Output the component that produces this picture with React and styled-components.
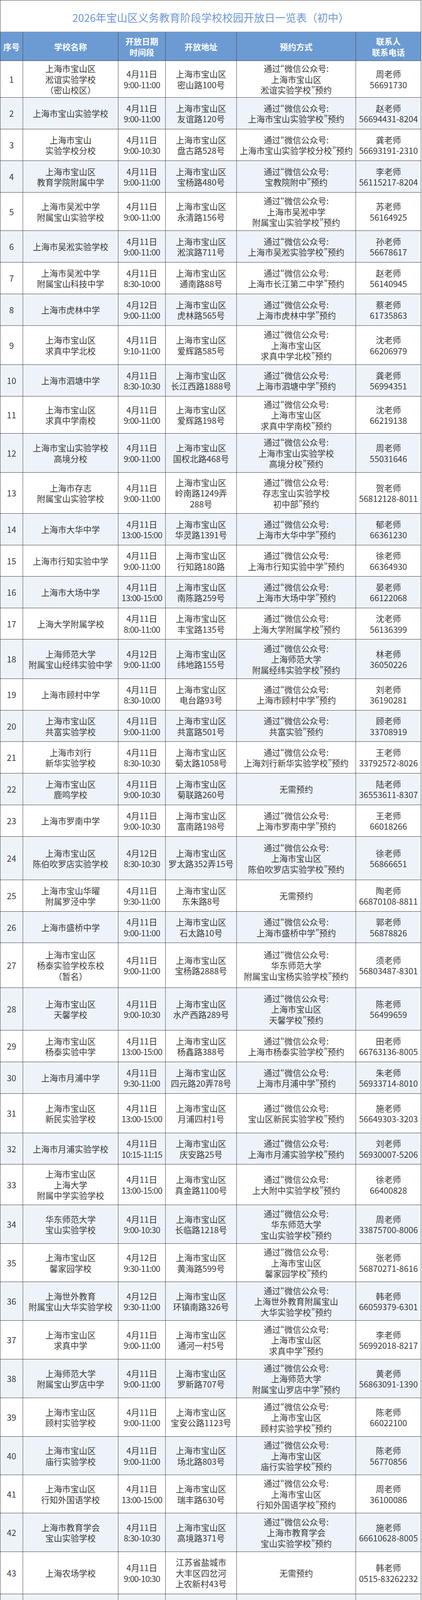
import React from "react";
import styled, { createGlobalStyle } from "styled-components";

const Global = createGlobalStyle`
  html, body { margin: 0; padding: 0; background: #ffffff; }
  body { font-family: "Noto Sans CJK SC", "Noto Sans", sans-serif; }
`;

const COLS = "57px 244px 121px 182px 305px 167px";

const Sheet = styled.div`
  width: 1076px;
  border: 1px solid #3f3f3f;
  font-family: "Noto Sans CJK SC", "Noto Sans", sans-serif;
  color: #3b3b3b;
`;

const Title = styled.div`
  height: 80px;
  box-sizing: border-box;
  padding-top: 6px;
  display: flex;
  align-items: center;
  justify-content: center;
  font-size: 27px;
  color: #6e97d0;
`;

const Row = styled.div`
  display: grid;
  grid-template-columns: ${COLS};
  height: ${(p) => p.$h}px;
  box-sizing: border-box;
  border-top: 1px solid ${(p) => (p.$head ? "#9a9a9a" : "#3f3f3f")};
  background: ${(p) => (p.$head ? "#6c9bd3" : p.$alt ? "#eef3fa" : "#ffffff")};
`;

const Cell = styled.div`
  display: flex;
  align-items: center;
  justify-content: center;
  min-width: 0;
  border-left: ${(p) => (p.$first ? "none" : "1px solid #4a4a4a")};
`;

const Text = styled.div`
  text-align: center;
  white-space: pre;
  font-size: 21.5px;
  line-height: 27.5px;
  font-feature-settings: ${(p) => (p.$prop ? '"pwid"' : "normal")};
`;

const HeadText = styled(Text)`
  color: #ffffff;
  font-weight: 700;
  font-size: 21px;
  line-height: 28px;
`;

const Line = styled.span`
  display: block;
  letter-spacing: ${(p) => (p.$tight ? "-1px" : "normal")};
`;

const W = (a) => `通过“微信公众号:\n${a}”预约`;

const DATA = [
  ["上海市宝山区\n淞谊实验学校\n（密山校区）", "4月11日\n9:00-11:00", "上海市宝山区\n密山路100号", W("上海市宝山区\n淞谊实验学校"), "周老师\n56691730"],
  ["上海市宝山实验学校", "4月11日\n9:00-11:00", "上海市宝山区\n友谊路120号", W("上海市宝山实验学校"), "赵老师\n56694431-8204"],
  ["上海市宝山\n实验学校分校", "4月11日\n9:00-10:30", "上海市宝山区\n盘古路528号", W("上海市宝山实验学校分校"), "龚老师\n56693191-2310"],
  ["上海市宝山区\n教育学院附属中学", "4月11日\n9:00-11:00", "上海市宝山区\n宝杨路480号", W("宝教院附中"), "李老师\n56115217-8204"],
  ["上海市吴淞中学\n附属宝山实验学校", "4月11日\n9:00-11:00", "上海市宝山区\n永清路156号", W("上海市吴淞中学\n附属宝山实验学校"), "苏老师\n56164925"],
  ["上海市吴淞实验学校", "4月11日\n9:00-11:00", "上海市宝山区\n淞滨路711号", W("上海市吴淞实验学校"), "孙老师\n56678617"],
  ["上海市吴淞中学\n附属宝山科技中学", "4月11日\n8:30-10:00", "上海市宝山区\n通南路88号", W("上海市长江第二中学"), "赵老师\n56140945"],
  ["上海市虎林中学", "4月12日\n9:00-11:00", "上海市宝山区\n虎林路565号", W("上海市虎林中学"), "蔡老师\n61735863"],
  ["上海市宝山区\n求真中学北校", "4月11日\n9:10-11:00", "上海市宝山区\n爱辉路585号", W("上海市宝山区\n求真中学北校"), "沈老师\n66206979"],
  ["上海市泗塘中学", "4月11日\n8:30-10:30", "上海市宝山区\n长江西路1888号", W("上海市泗塘中学"), "龚老师\n56994351"],
  ["上海市宝山区\n求真中学南校", "4月11日\n9:00-11:00", "上海市宝山区\n爱辉路198号", W("上海市宝山区\n求真中学南校"), "沈老师\n66219138"],
  ["上海市宝山实验学校\n高境分校", "4月11日\n9:00-11:00", "上海市宝山区\n国权北路468号", W("上海市宝山实验学校\n高境分校"), "周老师\n55031646"],
  ["上海市存志\n附属宝山实验学校", "4月11日\n9:00-11:00", "上海市宝山区\n岭南路1249弄\n288号", W("存志宝山实验学校\n初中部"), "贺老师\n56812128-8011"],
  ["上海市大华中学", "4月11日\n13:00-15:00", "上海市宝山区\n华灵路1391号", W("上海市大华中学"), "郁老师\n66361230"],
  ["上海市行知实验中学", "4月11日\n9:00-11:00", "上海市宝山区\n行知路180路", W("上海市行知实验中学"), "徐老师\n66364930"],
  ["上海市大场中学", "4月11日\n13:00-15:00", "上海市宝山区\n南陈路259号", W("上海市大场中学"), "晏老师\n66122068"],
  ["上海大学附属学校", "4月11日\n8:00-11:00", "上海市宝山区\n丰宝路135号", W("上海大学附属学校"), "沈老师\n56136399"],
  ["上海师范大学\n附属宝山经纬实验中学", "4月12日\n9:00-11:00", "上海市宝山区\n纬地路155号", W("上海师范大学\n附属经纬实验学校"), "林老师\n36050226"],
  ["上海市顾村中学", "4月11日\n8:30-10:00", "上海市宝山区\n电台路93号", W("上海市顾村中学"), "刘老师\n36190281"],
  ["上海市宝山区\n共富实验学校", "4月11日\n9:00-11:00", "上海市宝山区\n共富路501号", W("共富实验"), "顾老师\n33708919"],
  ["上海市刘行\n新华实验学校", "4月11日\n8:30-10:30", "上海市宝山区\n菊太路1058号", W("上海刘行新华实验学校"), "王老师\n33792572-8026"],
  ["上海市宝山区\n鹿鸣学校", "4月11日\n9:00-10:30", "上海市宝山区\n菊联路260号", "无需预约", "陆老师\n36553611-8307"],
  ["上海市罗南中学", "4月11日\n9:00-10:30", "上海市宝山区\n富南路198号", W("上海市罗南中学"), "王老师\n66018266"],
  ["上海市宝山区\n陈伯吹罗店实验学校", "4月12日\n8:30-10:30", "上海市宝山区\n罗太路352弄15号", W("上海市宝山区\n陈伯吹罗店实验学校"), "徐老师\n56866651"],
  ["上海市宝山华曜\n附属罗泾中学", "4月11日\n9:30-11:00", "上海市宝山区\n东朱路8号", "无需预约", "陶老师\n66870108-8811"],
  ["上海市盛桥中学", "4月11日\n9:00-11:00", "上海市宝山区\n石太路10号", W("上海市盛桥中学"), "郭老师\n56878826"],
  ["上海市宝山区\n杨泰实验学校东校\n（暂名）", "4月11日\n9:00-11:00", "上海市宝山区\n宝杨路2888号", W("华东师范大学\n附属宝山宝杨实验学校"), "须老师\n56803487-8301"],
  ["上海市宝山区\n天馨学校", "4月11日\n9:00-10:30", "上海市宝山区\n水产西路289号", W("上海市宝山区\n天馨学校"), "陈老师\n56499659"],
  ["上海市宝山区\n杨泰实验中学", "4月11日\n13:00-15:00", "上海市宝山区\n杨鑫路388号", W("上海市杨泰实验学校"), "田老师\n66763136-8005"],
  ["上海市月浦中学", "4月11日\n9:30-11:00", "上海市宝山区\n四元路20弄78号", W("上海市月浦中学"), "朱老师\n56933714-8010"],
  ["上海市宝山区\n新民实验学校", "4月11日\n13:00-15:00", "上海市宝山区\n月浦四村1号", W("宝山区新民实验学校"), "施老师\n56649303-3203"],
  ["上海市月浦实验学校", "4月11日\n10:15-11:15", "上海市宝山区\n庆安路25号", W("上海市月浦实验学校"), "刘老师\n56930007-5206"],
  ["上海市宝山区\n上海大学\n附属中学实验学校", "4月11日\n13:00-15:00", "上海市宝山区\n真金路1100号", W("上大附中实验学校"), "徐老师\n66400828"],
  ["华东师范大学\n宝山实验学校", "4月11日\n9:00-10:30", "上海市宝山区\n长临路1218号", W("华东师范大学\n宝山实验学校"), "周老师\n33875700-8006"],
  ["上海市宝山区\n馨家园学校", "4月12日\n9:30-11:00", "上海市宝山区\n黄海路599号", W("上海市宝山区\n馨家园学校"), "张老师\n56870271-8616"],
  ["上海世外教育\n附属宝山大华实验学校", "4月12日\n9:30-11:00", "上海市宝山区\n环镇南路326号", W("上海世外教育附属宝山\n大华实验学校"), "韩老师\n66059379-6301"],
  ["上海市宝山区\n求真中学", "4月11日\n9:00-11:00", "上海市宝山区\n通河一村5号", W("上海市宝山区\n求真中学"), "李老师\n56992018-8217"],
  ["上海师范大学\n附属宝山罗店中学", "4月11日\n9:00-11:00", "上海市宝山区\n罗新路707号", W("上海师范大学\n附属宝山罗店中学"), "黄老师\n56863091-1390"],
  ["上海市宝山区\n顾村实验学校", "4月11日\n9:00-11:00", "上海市宝山区\n宝安公路1123号", W("上海市宝山区\n顾村实验学校"), "陈老师\n66022100"],
  ["上海市宝山区\n庙行实验学校", "4月11日\n9:00-11:00", "上海市宝山区\n场北路803号", W("上海市宝山区\n庙行实验学校"), "陈老师\n56770856"],
  ["上海市宝山区\n行知外国语学校", "4月11日\n13:00-15:00", "上海市宝山区\n瑞丰路630号", W("上海市宝山区\n行知外国语学校"), "周老师\n36100086"],
  ["上海市教育学会\n宝山实验学校", "4月11日\n8:30-10:30", "上海市宝山区\n高境路371号", W("上海市教育学会\n宝山实验学校"), "施老师\n66610628-8005"],
  ["上海农场学校", "4月11日\n9:00-10:30", "江苏省盐城市\n大丰区四岔河\n上农新村43号", "无需预约", "韩老师\n0515-83262232"],
  ["上海市宝山区\n罗店第二中学", "4月11日\n8:30-10:30", "上海市宝山区\n美安路599号", W("上海市宝山区罗店二中"), "周老师\n66875611"],
  ["上海市宝山区\n乐之中学", "4月12日\n9:30-11:00", "上海市宝山区\n菊泉街106号", "无需预约", "王老师\n66035760"],
  ["上海大学\n附属宝山外国语学校", "4月11日\n9:00-11:00", "上海市宝山区\n铁山路2288号", "无需预约", "龚老师\n56575316"],
  ["上海市宝山区\n美兰湖中学", "4月11日\n13:00-15:00", "上海市宝山区\n美诺路150号", W("上海市宝山区\n美兰湖中学"), "孙老师\n56676505"],
  ["上海市白茅岭学校\n（上海市白茅岭学校\n军天湖分校）", "4月11日\n9:00-10:30", "安徽省宣城市\n郎溪县涛城镇\n白茅岭农场/\n安徽省宣城市\n宣州区军天湖农场", "无需预约", "陶老师、吴老师\n0563-30477074"],
  ["上海市行知中学\n附属宝山实验学校", "4月11日\n9:00-11:00", "上海市宝山区\n锦秋路3000号", W("上海市行知中学\n附属宝山实验学校"), "陈老师\n56760620-8091"],
  ["上海外国语大学\n附属宝山双语学校", "4月11日\n9:00-10:30", "上海市宝山区\n金池路295号", W("上外宝山双语发布"), "王老师\n56166186"],
  ["上海师范大学\n附属宝山潜溪学校", "4月11日\n8:30-11:00", "上海市宝山区\n南陈路500号", W("上海师范大学\n附属宝山潜溪学校"), "王老师\n56670299"],
  ["上海师范大学\n附属宝山实验学校", "4月11日\n9:00-11:00", "上海市宝山区\n湄浦路1866号", W("上海师范大学\n附属宝山实验学校"), "周老师\n56750738"],
  ["上海师范大学\n附属中学宝山分校\n（暂名）\n（原上海市宝山区\n南大实验学校）", "4月11日\n8:00-10:00", "上海市宝山区\n丰皓路720号", W("上海市宝山区\n南大实验学校"), "徐老师\n56696033"],
  ["上海世外教育\n附属宝山美兰湖\n实验学校", "4月11日\n9:00-11:00", "上海市宝山区\n美兰湖路239号", W("上海世外教育\n附属美兰湖实验学校"), "曹老师\n66877059"],
  ["上海市宝山中学", "4月11日\n9:00-11:00", "上海市宝山区\n盘古路247弄20号", W("上海市宝山中学"), "张老师\n56607308"],
  ["上海市宝山区\n顾村科技园学校", "4月11日\n9:00-10:30", "上海市宝山区\n沙好路99号", W("上海市宝山区\n顾村科技园学校"), "周老师\n36213008-8027"],
  ["上海市宝山\n第二实验学校", "4月11日\n9:00-11:00", "上海市宝山区\n美康路712号", W("上海市宝山第二实验学校"), "杨老师\n66870869-8802"],
  ["上海市宝山区\n新江湾实验学校", "4月11日\n9:00-11:00", "上海市宝山区\n恒耀路200号", W("上海市宝山区\n新江湾实验学校"), "徐老师\n65643394"],
  ["上海民办\n至德实验学校", "4月12日\n8:00-11:30", "上海市宝山区\n海江一路16号", W("上海民办至德实验学校"), "黄老师\n56102227"],
  ["上海市民办锦秋学校", "4月12日\n9:00-11:30", "上海市宝山区\n锦秋路999号", W("上海锦秋学校"), "陈老师\n56133999"],
  ["上海市民办交华中学", "4月11日\n13:30-16:00", "上海市宝山区\n大华三路99号", W("上海市民办交华中学"), "陈老师\n66366005"],
  ["上海金瑞学校", "4月11日\n8:30-12:00", "上海市宝山区\n金池路169号", W("上海金瑞学校"), "龚老师\n13166130305"],
  ["上海市同洲模范学校", "4月11日\n8:30-11:30", "上海市宝山区\n共康东路268号", W("七彩同洲"), "牛老师\n56358258"],
  ["上海民办\n华曜宝山实验学校", "4月12日\n13:30-16:00", "上海市宝山区\n盘古路2369弄\n26号", W("上海民办华曜\n宝山实验学校"), "李老师\n56026000"],
  ["上海宝山区世外学校", "4月12日\n13:00-15:00", "上海市宝山区\n云上路29号", W("宝山世外"), "孟老师\n33711888-8509"],
];

// y of each row's top border; last value = sheet bottom border
const BOUNDS = [
  155, 249, 330, 411, 492, 590, 671, 752, 833, 933, 1014,
  1109, 1209, 1314, 1395, 1475, 1556, 1636, 1737, 1818, 1898,
  1979, 2060, 2141, 2252, 2333, 2413, 2528, 2637, 2718, 2799,
  2900, 2980, 3084, 3183, 3281, 3380, 3479, 3578, 3677, 3775,
  3873, 3972, 4080, 4180, 4261, 4342, 4444, 4600, 4700, 4781,
  4889, 4989, 5144, 5248, 5329, 5443, 5548, 5646, 5727, 5808,
  5888, 5969, 6050, 6146, 6227,
];

const HEAD = ["序号", "学校名称", "开放日期\n时间段", "开放地址", "预约方式", "联系人\n联系电话"];

const DateTime = ({ value }) => {
  const [d, t] = value.split("\n");
  return (
    <Text>
      <Line>{d}</Line>
      <Line $tight>{t}</Line>
    </Text>
  );
};

export default function App() {
  return (
    <>
      <Global />
      <Sheet>
        <Title>2026年宝山区义务教育阶段学校校园开放日一览表（初中）</Title>
        <Row $head $h={74}>
          {HEAD.map((h, i) => (
            <Cell key={i} $first={i === 0}>
              <HeadText>{h}</HeadText>
            </Cell>
          ))}
        </Row>
        {DATA.map((r, idx) => (
          <Row key={idx} $alt={idx % 2 === 1} $h={BOUNDS[idx + 1] - BOUNDS[idx]}>
            <Cell $first>
              <Text>{idx + 1}</Text>
            </Cell>
            {r.map((c, j) => (
              <Cell key={j}>
                {j === 1 ? <DateTime value={c} /> : <Text $prop={j === 3}>{c}</Text>}
              </Cell>
            ))}
          </Row>
        ))}
      </Sheet>
    </>
  );
}
